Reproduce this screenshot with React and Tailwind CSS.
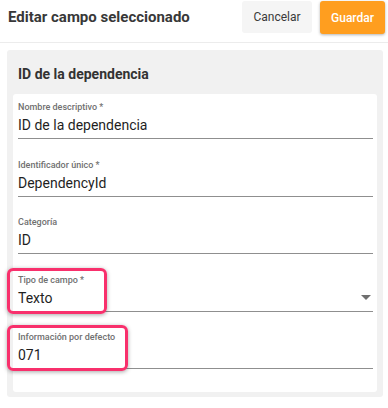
import React from 'react'

const FIELDS = [
  { label: 'Nombre descriptivo *', value: 'ID de la dependencia' },
  { label: 'Identificador único *', value: 'DependencyId' },
  { label: 'Categoría', value: 'ID' },
  { label: 'Tipo de campo *', value: 'Texto', select: true, mark: 'w-[100px]' },
  { label: 'Información por defecto', value: '071', mark: 'w-[121px]' },
]

const Field = ({ field }) => (
  <div className="relative">
    {field.mark && (
      <div
        className={
          'absolute left-[-11px] top-[-6px] h-[46px] rounded-[6px] border-[3px] border-[#f8306c] shadow-[0_1px_4px_rgba(0,0,0,0.35)] pointer-events-none ' +
          field.mark
        }
      />
    )}
    <div className="border-b border-[#8f8f8f] pb-[3px]">
      <p className="h-[12px] text-[9px] leading-[12px] font-medium text-[#707070]">{field.label}</p>
      <div className="mt-[2px] flex items-center justify-between h-[20px]">
        <span className="text-[14px] leading-[20px] text-[#1f1f1f]">{field.value}</span>
        {field.select && (
          <svg width="10" height="5" viewBox="0 0 10 5" className="mr-[2px]">
            <path d="M0 0 L10 0 L5 5 Z" fill="#6f6f6f" />
          </svg>
        )}
      </div>
    </div>
  </div>
)

export default function App() {
  return (
    <div className="w-[388px] h-[408px] bg-white overflow-hidden" style={{ fontFamily: 'Roboto, "Liberation Sans", sans-serif' }}>
      <div className="flex items-start justify-between pt-[1px] pb-[8px] pl-[8px] pr-[3px] border-b border-[#ececec]">
        <h1 className="mt-[6px] text-[15px] font-bold text-[#383838] leading-[20px]">Editar campo seleccionado</h1>
        <div className="flex gap-[8px]">
          <button className="w-[70px] h-[32px] rounded-[3px] bg-[#f5f5f5] text-[12px] text-[#3a3a3a]">Cancelar</button>
          <button className="w-[65px] h-[33px] rounded-[3px] bg-[#ff9e1f] text-[12px] font-medium text-white shadow-[0_1px_3px_rgba(0,0,0,0.3)]">Guardar</button>
        </div>
      </div>

      <div className="mt-[7px] ml-[7px] mr-[5px] bg-[#f1f1f1] rounded-[3px] px-[6px] pt-[16px] pb-[5px]">
        <h2 className="text-[14px] leading-[16px] font-bold text-[#333] pl-[5px] mb-[12px]">ID de la dependencia</h2>
        <div className="bg-white rounded-[3px] pl-[5px] pr-[4px] pt-[7px] pb-[23px] flex flex-col gap-[19.5px]">
          {FIELDS.map((f, i) => (
            <Field key={i} field={f} />
          ))}
        </div>
      </div>
    </div>
  )
}
